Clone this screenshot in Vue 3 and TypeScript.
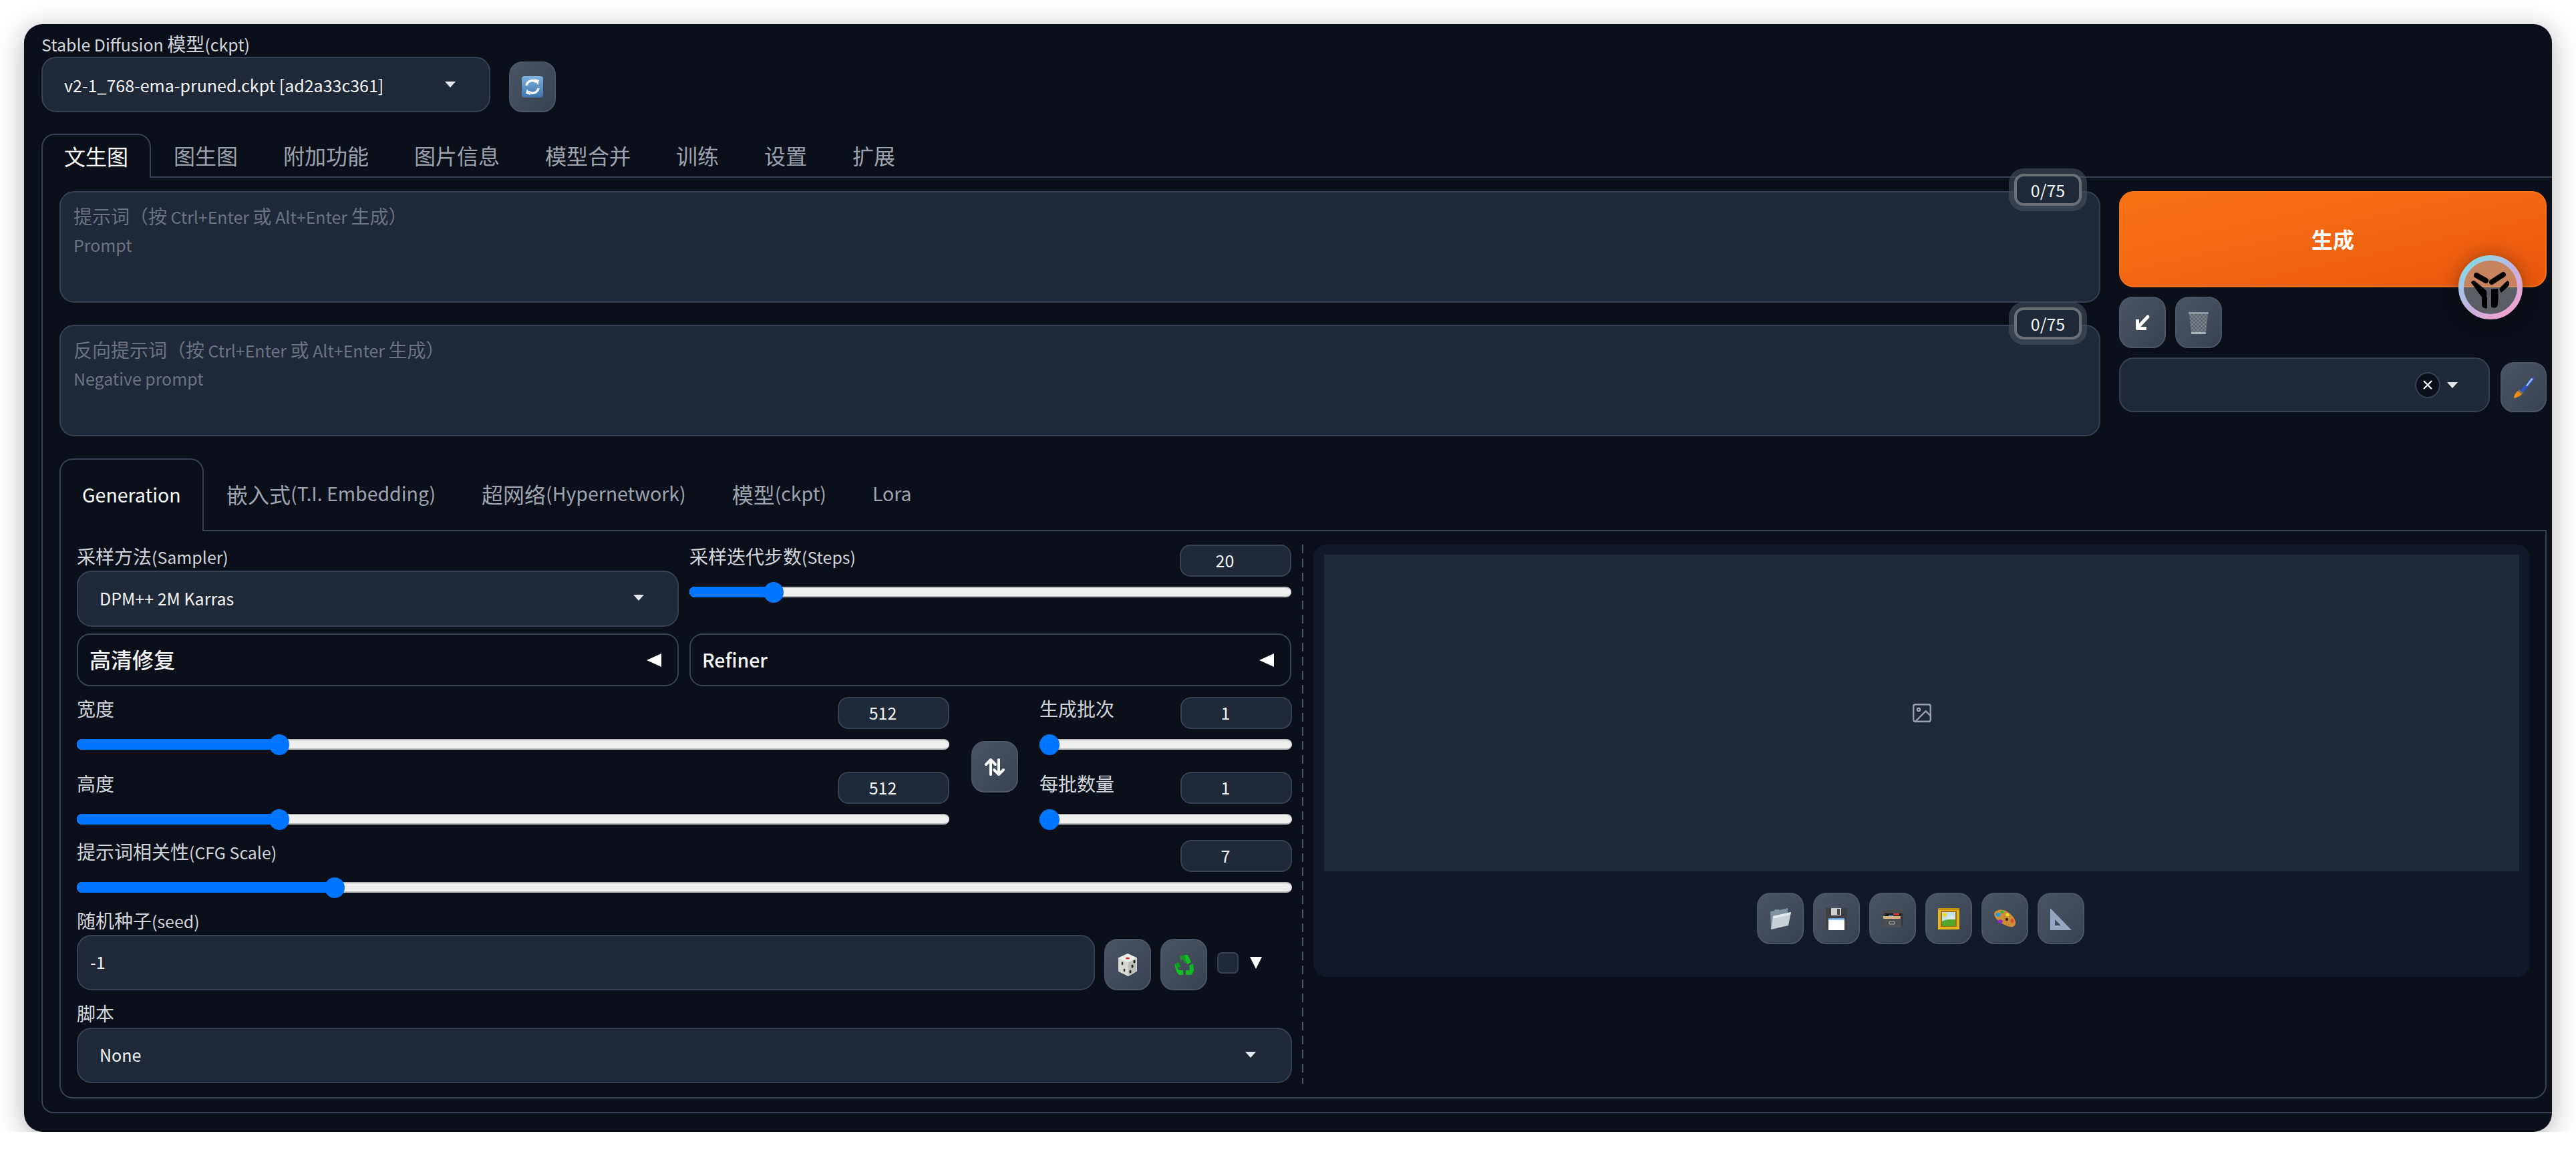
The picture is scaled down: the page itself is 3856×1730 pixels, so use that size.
<script setup lang="ts">
interface SliderItem {
  cjk: string;
  latin?: string;
  value: number;
  left: number; // thumb centre, percent of the track
}

interface TabItem {
  cjk?: string;
  latin?: string;
}

const mainTabs = ["文生图", "图生图", "附加功能", "图片信息", "模型合并", "训练", "设置", "扩展"];
const subTabs: TabItem[] = [
  { latin: "Generation" },
  { cjk: "嵌入式", latin: "(T.I. Embedding)" },
  { cjk: "超网络", latin: "(Hypernetwork)" },
  { cjk: "模型", latin: "(ckpt)" },
  { latin: "Lora" },
];

const steps: SliderItem = { cjk: "采样迭代步数", latin: "(Steps)", value: 20, left: 14 };
const sizeSliders: SliderItem[] = [
  { cjk: "宽度", value: 512, left: 23.2 },
  { cjk: "高度", value: 512, left: 23.2 },
];
const batchSliders: SliderItem[] = [
  { cjk: "生成批次", value: 1, left: 4 },
  { cjk: "每批数量", value: 1, left: 4 },
];
const cfg: SliderItem = { cjk: "提示词相关性", latin: "(CFG Scale)", value: 7, left: 21.2 };
</script>

<template>
  <div class="window">
    <div class="model-row">
      <div class="model-field">
        <div class="field-label model-label"><span class="lat">Stable Diffusion </span>模型<span class="lat">(ckpt)</span></div>
        <div class="select model-select">
          <span>v2-1_768-ema-pruned.ckpt [ad2a33c361]</span>
          <i class="caret"></i>
        </div>
      </div>
      <button class="tool-btn refresh-btn">
        <svg width="34" height="34" viewBox="0 0 34 34">
          <defs>
            <linearGradient id="blue-tile" x1="0" y1="0" x2="0" y2="1">
              <stop offset="0" stop-color="#7fb2dd" />
              <stop offset="1" stop-color="#3f74ad" />
            </linearGradient>
          </defs>
          <rect x="1" y="1" width="32" height="32" rx="4" fill="url(#blue-tile)" />
          <path d="M8 15a9 9 0 0 1 15-5" fill="none" stroke="#fff" stroke-width="3.4" />
          <path d="M20 5l7 2-2 7z" fill="#fff" />
          <path d="M26 19a9 9 0 0 1-15 5" fill="none" stroke="#fff" stroke-width="3.4" />
          <path d="M14 29l-7-2 2-7z" fill="#fff" />
        </svg>
      </button>
    </div>

    <div class="tabs main-tabs">
      <div v-for="(t, i) in mainTabs" :key="t" class="tab" :class="{ active: i === 0 }">{{ t }}</div>
      <div class="tab-rest"></div>
    </div>

    <div class="tab-panel">
      <div class="prompt-row">
        <div class="prompts">
          <div class="prompt-box">
            <div class="prompt-input">
              <div>提示词（按<span class="lat"> Ctrl+Enter </span>或<span class="lat"> Alt+Enter </span>生成）</div>
              <div><span class="lat">Prompt</span></div>
            </div>
            <div class="token-count">0/75</div>
          </div>
          <div class="prompt-box">
            <div class="prompt-input">
              <div>反向提示词（按<span class="lat"> Ctrl+Enter </span>或<span class="lat"> Alt+Enter </span>生成）</div>
              <div><span class="lat">Negative prompt</span></div>
            </div>
            <div class="token-count">0/75</div>
          </div>
        </div>

        <div class="actions">
          <button class="generate-btn">生成</button>
          <div class="action-tools">
            <button class="tool-btn">
              <svg width="28" height="28" viewBox="0 0 28 28" fill="none" stroke="#fff" stroke-width="5" stroke-linecap="round">
                <path d="M22 5L7 21" />
                <path d="M6.5 9v13.5H20" stroke-linecap="butt" stroke-linejoin="round" />
              </svg>
            </button>
            <button class="tool-btn">
              <svg width="36" height="36" viewBox="0 0 36 36">
                <defs>
                  <pattern id="mesh" width="4" height="4" patternUnits="userSpaceOnUse" patternTransform="rotate(45)">
                    <rect width="4" height="4" fill="#5b636c" />
                    <path d="M0 0h4M0 0v4" stroke="#9aa3ab" stroke-width="1" />
                  </pattern>
                </defs>
                <path d="M4 4h28l-3 30H7z" fill="url(#mesh)" />
                <rect x="3" y="2" width="30" height="3" rx="1" fill="#8d979f" />
                <rect x="7" y="32" width="22" height="3" rx="1" fill="#a6b0b8" />
              </svg>
            </button>
          </div>
          <div class="style-row">
            <div class="select style-select">
              <span class="clear-x">
                <svg width="16" height="16" viewBox="0 0 16 16" stroke="#fff" stroke-width="2.2"><path d="M2 2l12 12M14 2L2 14" /></svg>
              </span>
              <i class="caret"></i>
            </div>
            <button class="tool-btn brush-btn">
              <svg width="34" height="34" viewBox="0 0 34 34">
                <path d="M29 2c2-1 4 1 3 3L16 24l-4-3z" fill="#2f55c8" />
                <path d="M28 3l3 1-9 11-2-1z" fill="#9dbcf4" />
                <path d="M10 20l6 5-2 2-6-5z" fill="#77767a" />
                <path d="M2 33c0-4 2-8 6-11l6 5c-3 3-7 5-12 6z" fill="#f08a12" />
              </svg>
            </button>
          </div>
        </div>

        <div class="avatar">
          <svg width="96" height="96" viewBox="0 0 96 96">
            <defs>
              <linearGradient id="ring" x1="0.1" y1="0.1" x2="0.8" y2="0.95">
                <stop offset="0" stop-color="#86d9e6" />
                <stop offset="0.5" stop-color="#c2b4e3" />
                <stop offset="1" stop-color="#efa2cd" />
              </linearGradient>
            </defs>
            <circle cx="48" cy="48" r="44" fill="rgba(166, 166, 170, 0.52)" stroke="url(#ring)" stroke-width="8" />
            <path d="M27 30l14 8" stroke="#000" stroke-width="8" stroke-linecap="round" />
            <path d="M67 29L50 40" stroke="#000" stroke-width="8" stroke-linecap="round" />
            <path d="M19 41c1-3 4-4 6-2l16 13c2 2 2 9 0 13-3 0-6-2-8-5z" fill="#000" />
            <path d="M75 39c2 3 1 6-1 8l-10 9c-2-3-3-5-2-7l9-9c1-1 3-2 4-1z" fill="#000" />
            <path d="M35 57l8 6v16c-5 1-8-1-8-6z" fill="#000" />
            <path d="M49 51l10-1c1 9 1 20-1 27-3 2-7 2-9 0z" fill="#000" />
          </svg>
        </div>
      </div>

      <div class="tabs sub-tabs">
        <div v-for="(t, i) in subTabs" :key="i" class="tab" :class="{ active: i === 0 }">
          {{ t.cjk }}<span v-if="t.latin" class="lat">{{ t.latin }}</span>
        </div>
        <div class="tab-rest"></div>
      </div>

      <div class="sub-panel">
        <div class="params">
          <div class="two-col">
            <div>
              <div class="field-label">采样方法<span class="lat">(Sampler)</span></div>
              <div class="select sampler-select">
                <span>DPM++ 2M Karras</span>
                <i class="caret"></i>
              </div>
            </div>
            <div class="slider-field">
              <div class="slider-head">
                <span class="field-label">{{ steps.cjk }}<span class="lat">{{ steps.latin }}</span></span>
                <div class="num-box">{{ steps.value }}</div>
              </div>
              <div class="track">
                <div class="track-fill" :style="{ width: steps.left + '%' }"></div>
                <div class="thumb" :style="{ left: steps.left + '%' }"></div>
              </div>
            </div>
          </div>

          <div class="two-col accordion-row">
            <div class="accordion">
              <span class="accordion-title">高清修复</span>
              <i class="caret-left"></i>
            </div>
            <div class="accordion">
              <span class="accordion-title"><span class="lat">Refiner</span></span>
              <i class="caret-left"></i>
            </div>
          </div>

          <div class="size-row">
            <div class="slider-stack">
              <div v-for="s in sizeSliders" :key="s.cjk" class="slider-field">
                <div class="slider-head">
                  <span class="field-label">{{ s.cjk }}</span>
                  <div class="num-box">{{ s.value }}</div>
                </div>
                <div class="track">
                  <div class="track-fill" :style="{ width: s.left + '%' }"></div>
                  <div class="thumb" :style="{ left: s.left + '%' }"></div>
                </div>
              </div>
            </div>
            <button class="tool-btn swap-btn">
              <svg width="34" height="28" viewBox="0 0 34 28" fill="none" stroke="#fff" stroke-width="4" stroke-linecap="round" stroke-linejoin="round">
                <path d="M11 25V3M4 10l7-7 7 7" />
                <path d="M23 3v22M16 18l7 7 7-7" />
              </svg>
            </button>
            <div class="slider-stack">
              <div v-for="s in batchSliders" :key="s.cjk" class="slider-field">
                <div class="slider-head">
                  <span class="field-label">{{ s.cjk }}</span>
                  <div class="num-box">{{ s.value }}</div>
                </div>
                <div class="track">
                  <div class="track-fill" :style="{ width: s.left + '%' }"></div>
                  <div class="thumb" :style="{ left: s.left + '%' }"></div>
                </div>
              </div>
            </div>
          </div>

          <div class="slider-field cfg-field">
            <div class="slider-head">
              <span class="field-label">{{ cfg.cjk }}<span class="lat">{{ cfg.latin }}</span></span>
              <div class="num-box">{{ cfg.value }}</div>
            </div>
            <div class="track">
              <div class="track-fill" :style="{ width: cfg.left + '%' }"></div>
              <div class="thumb" :style="{ left: cfg.left + '%' }"></div>
            </div>
          </div>

          <div class="seed-field">
            <div class="field-label">随机种子<span class="lat">(seed)</span></div>
            <div class="seed-row">
              <div class="select seed-input">-1</div>
              <button class="tool-btn">
                <svg width="34" height="34" viewBox="0 0 34 34">
                  <path d="M17 1l13 6v19l-12 7-14-7V7z" fill="#d8d8d6" stroke="#d8d8d6" stroke-width="2" stroke-linejoin="round" />
                  <path d="M17 1l13 6-13 6L4 7z" fill="#efefed" />
                  <path d="M18 14l12-7v19l-12 7z" fill="#bdbdba" />
                  <ellipse cx="17" cy="7" rx="3" ry="1.6" fill="#e0323a" />
                  <ellipse cx="27" cy="12" rx="1.6" ry="2.6" fill="#222" />
                  <ellipse cx="24" cy="19" rx="1.6" ry="2.6" fill="#222" />
                  <ellipse cx="21" cy="27" rx="1.6" ry="2.6" fill="#222" />
                  <ellipse cx="9" cy="15" rx="1.4" ry="2.4" fill="#333" />
                  <ellipse cx="12" cy="25" rx="1.4" ry="2.4" fill="#333" />
                </svg>
              </button>
              <button class="tool-btn">
                <svg width="34" height="32" viewBox="0 0 34 32">
                  <path d="M11 3l7-2 6 10-5 3-4-7-3 4z" fill="#1d8f2c" />
                  <path d="M18 1h5l5 11-6 3z" fill="#12c023" />
                  <path d="M3 15l6-3 4 7-5 1 3 5H6z" fill="#0f9c20" />
                  <path d="M3 15l3 11 4 5h6v-7H9z" fill="#12c023" />
                  <path d="M31 14l-6 3 1 7h-6v7h8l4-6z" fill="#10b821" />
                </svg>
              </button>
              <i class="checkbox"></i>
              <i class="caret-big"></i>
            </div>
          </div>

          <div class="script-field">
            <div class="field-label">脚本</div>
            <div class="select script-select">
              <span>None</span>
              <i class="caret"></i>
            </div>
          </div>
        </div>

        <div class="dashed"></div>

        <div class="gallery">
          <div class="image-empty">
            <svg width="34" height="34" viewBox="0 0 24 24" fill="none" stroke="#9ca3af" stroke-width="1.6" stroke-linecap="round" stroke-linejoin="round">
              <rect x="3" y="3" width="18" height="18" rx="2" />
              <circle cx="8.5" cy="8.5" r="1.5" />
              <path d="M21 15l-5-5L5 21" />
            </svg>
          </div>
          <div class="gallery-tools">
            <button class="tool-btn">
              <svg width="34" height="34" viewBox="0 0 34 34">
                <path d="M2 6l6-1 1-2 6 0 1 1 12-3v24L3 33z" fill="#7b939c" />
                <path d="M6 13l27-6-4 20-26 6z" fill="#c6d0d5" />
                <path d="M6 13l27-6-1 4-26 6z" fill="#e3e8ea" />
              </svg>
            </button>
            <button class="tool-btn">
              <svg width="34" height="34" viewBox="0 0 34 34">
                <rect x="1" y="1" width="32" height="32" fill="#3f3f42" />
                <rect x="9" y="1" width="15" height="11" fill="#cfcfcf" />
                <rect x="18" y="2" width="4" height="9" fill="#4a4a4a" />
                <rect x="5" y="16" width="24" height="18" fill="#fff" />
                <rect x="5" y="16" width="24" height="2.4" fill="#5fa0e0" />
              </svg>
            </button>
            <button class="tool-btn">
              <svg width="32" height="26" viewBox="0 0 32 26">
                <rect x="1" y="0" width="30" height="5" rx="1" fill="#4a4a4c" />
                <rect x="4" y="5" width="25" height="8" fill="#1a1a1a" />
                <rect x="17" y="5" width="9" height="3" fill="#c8382c" />
                <rect x="10" y="7" width="7" height="2" fill="#3a78c0" />
                <path d="M2 9h26v6H2z" fill="#d8b27a" />
                <rect x="1" y="13" width="28" height="13" fill="#4c4f52" />
                <rect x="11" y="17" width="8" height="4" rx="1" fill="none" stroke="#aaa" stroke-width="1.2" />
                <path d="M29 5h2v16l-2 5z" fill="#333" />
              </svg>
            </button>
            <button class="tool-btn">
              <svg width="34" height="34" viewBox="0 0 34 34">
                <rect x="1" y="1" width="32" height="32" fill="#e8b41a" />
                <rect x="1" y="1" width="32" height="3" fill="#c98f0d" />
                <rect x="5" y="5" width="24" height="24" fill="#9c6f10" />
                <rect x="7" y="7" width="20" height="21" fill="#bfe0ee" />
                <circle cx="11" cy="11" r="3" fill="#f2d421" />
                <path d="M16 14l5-3 6 4v4H13z" fill="#dfe6e6" />
                <path d="M7 21c6-4 13-3 20-3v10H7z" fill="#52a62c" />
              </svg>
            </button>
            <button class="tool-btn">
              <svg width="36" height="28" viewBox="0 0 36 28">
                <path d="M2 6c3-6 12-7 19-3s14 12 13 18-7 6-12 4S2 16 2 6z" fill="#cf8f36" />
                <ellipse cx="8" cy="8" rx="3.6" ry="3" fill="#2b9be0" />
                <ellipse cx="14" cy="4" rx="2.6" ry="2.2" fill="#38b835" />
                <ellipse cx="22" cy="8" rx="2.6" ry="2.2" fill="#f1dc2c" />
                <ellipse cx="11" cy="18" rx="3.8" ry="2.8" fill="#8a2fc0" />
                <circle cx="21" cy="15" r="2.2" fill="#2c241c" />
                <ellipse cx="29" cy="17" rx="2.4" ry="3" fill="#e2473a" />
              </svg>
            </button>
            <button class="tool-btn">
              <svg width="34" height="34" viewBox="0 0 34 34">
                <path fill-rule="evenodd" d="M1 1l32 33H1zM8 18v9h9z" fill="#93a6c2" />
              </svg>
            </button>
          </div>
        </div>
      </div>
    </div>
  </div>
  <div class="watermark">CSDN @小</div>
</template>

<style>
html,
body {
  margin: 0;
  background: #fff;
}
</style>

<style scoped>
* {
  box-sizing: border-box;
}

.window {
  position: relative;
  margin: 36px 0 0 36px;
  width: 3784px;
  height: 1658px;
  background: #0b0f19;
  border-radius: 28px;
  overflow: hidden;
  box-shadow: 0 8px 42px rgba(0, 0, 0, 0.3);
  font-family: "Noto Sans CJK SC", "Noto Sans", sans-serif;
  font-size: 25px;
  color: #f3f4f6;
}

button {
  font-family: inherit;
  cursor: pointer;
}

i {
  display: block;
}

/* Latin runs sit a bit smaller than the CJK around them */
.lat {
  font-size: 0.89em;
}

.field-label {
  display: block;
  height: 39px;
  font-size: 28px;
  line-height: 35px;
  color: #d1d5db;
}

.model-row {
  display: flex;
  align-items: flex-end;
  gap: 28px;
  padding: 14px 0 0 26px;
}

.model-label {
  height: 35px;
  line-height: 31px;
}

.select {
  display: flex;
  align-items: center;
  justify-content: space-between;
  background: #1f2937;
  border: 2px solid #374151;
  border-radius: 22px;
  color: #f3f4f6;
}

.model-select {
  width: 672px;
  height: 83px;
  padding: 0 50px 0 32px;
}

.caret {
  width: 0;
  height: 0;
  border-left: 8px solid transparent;
  border-right: 8px solid transparent;
  border-top: 9px solid #e5e7eb;
}

.tool-btn {
  display: flex;
  align-items: center;
  justify-content: center;
  flex: none;
  width: 70px;
  height: 77px;
  padding: 0;
  background: linear-gradient(to bottom right, #4b5563, #374151);
  border: 2px solid #4b5563;
  border-radius: 20px;
}

.refresh-btn {
  height: 76px;
}

.tabs {
  display: flex;
}

.main-tabs {
  height: 66px;
  margin: 32px 0 0 26px;
}

.sub-tabs {
  height: 109px;
  margin-top: 33px;
}

.tab {
  display: flex;
  align-items: center;
  padding: 0 34px;
  font-size: 32px;
  line-height: 1;
  color: #9ca3af;
  white-space: pre;
  border-bottom: 2px solid #374151;
}

.sub-tabs .tab {
  padding: 0 34.5px 2px;
}

.tab.active,
.sub-tabs .tab.active {
  padding: 0 32px 2px;
  color: #fff;
  border: 2px solid #374151;
  border-bottom: none;
  border-radius: 20px 20px 0 0;
}

.tab-rest {
  flex: 1;
  border-bottom: 2px solid #374151;
}

.tab-panel {
  position: relative;
  margin-left: 26px;
  padding: 20px 8px 20px 25px;
  height: 1400px;
  border-left: 2px solid #374151;
  border-bottom: 2px solid #374151;
  border-bottom-left-radius: 18px;
}

.prompt-row {
  display: flex;
  gap: 28px;
}

.prompts {
  display: flex;
  flex-direction: column;
  gap: 33px;
  flex: 1;
}

.prompt-box {
  position: relative;
  height: 167px;
}

.prompt-input {
  height: 100%;
  padding: 15px 19px;
  background: #1f2937;
  border: 2px solid #374151;
  border-radius: 22px;
  color: #6b7280;
  font-size: 28px;
  line-height: 41px;
  white-space: pre;
}

.token-count {
  position: absolute;
  top: -26px;
  right: 28px;
  width: 101px;
  height: 48px;
  display: flex;
  align-items: center;
  justify-content: center;
  background: #1f2937;
  border: 4px solid #6b6f76;
  border-radius: 14px;
  box-shadow: 0 0 0 8px rgba(75, 85, 99, 0.55);
  color: #f3f4f6;
}

.actions {
  display: flex;
  flex-direction: column;
  gap: 14px;
  width: 640px;
}

.generate-btn {
  height: 144px;
  padding: 0 0 2px;
  background: linear-gradient(to bottom right, #f97316, #ea580c);
  border: 2px solid #f97316;
  border-radius: 22px;
  color: #fff;
  font-size: 32px;
  font-weight: 700;
}

.action-tools {
  display: flex;
  gap: 14px;
}

.style-row {
  display: flex;
  align-items: flex-end;
  justify-content: space-between;
}

.style-select {
  width: 555px;
  height: 82px;
  padding-right: 46px;
  justify-content: flex-end;
  gap: 10px;
}

.clear-x {
  display: flex;
  align-items: center;
  justify-content: center;
  width: 38px;
  height: 39px;
  background: #0b0f19;
  border: 2px solid #374151;
  border-radius: 50%;
}

.brush-btn {
  width: 69px;
  height: 75px;
}

.avatar {
  position: absolute;
  top: 116px;
  right: 44px;
  width: 96px;
  height: 96px;
  border-radius: 50%;
  box-shadow: 0 0 28px rgba(0, 0, 0, 0.35);
}

.avatar svg {
  display: block;
}

.sub-panel {
  display: flex;
  height: 849px;
  padding: 20px 0 20px 24px;
  border: 2px solid #374151;
  border-top: none;
  border-radius: 0 0 20px 20px;
}

.params {
  display: flex;
  flex-direction: column;
  width: 1819px;
  flex: none;
}

.two-col {
  display: grid;
  grid-template-columns: 901px 901px;
  gap: 16px;
}

.sampler-select {
  height: 84px;
  padding: 0 50px 3px 32px;
}

.slider-head {
  display: flex;
  justify-content: space-between;
  align-items: flex-start;
  height: 48px;
}

.num-box {
  width: 167px;
  height: 48px;
  padding-right: 32px;
  line-height: 42px;
  text-align: center;
  background: #1f2937;
  border: 2px solid #374151;
  border-radius: 16px;
  color: #f3f4f6;
}

.track {
  position: relative;
  height: 16px;
  margin-top: 15px;
  background: #efefef;
  border-top: 2px solid #b8b8b8;
  border-bottom: 2px solid #b8b8b8;
  border-radius: 8px;
}

.track-fill {
  position: absolute;
  top: -2px;
  bottom: -2px;
  left: 0;
  background: #0075ff;
  border-radius: 8px 0 0 8px;
}

.thumb {
  position: absolute;
  top: -9px;
  width: 30px;
  height: 31px;
  margin-left: -15px;
  background: #0075ff;
  border-radius: 50%;
}

.accordion-row {
  margin-top: 10px;
}

.accordion {
  display: flex;
  align-items: center;
  justify-content: space-between;
  height: 79px;
  padding: 0 24px 0 17px;
  border: 2px solid #374151;
  border-radius: 20px;
}

.accordion-title {
  font-size: 32px;
  line-height: 44px;
  padding-bottom: 4px;
  font-weight: 500;
  color: #f3f4f6;
}

.caret-left {
  width: 0;
  height: 0;
  border-top: 10px solid transparent;
  border-bottom: 10px solid transparent;
  border-right: 22px solid #fff;
}

.size-row {
  display: grid;
  grid-template-columns: 1306px 70px 378px;
  justify-content: space-between;
  margin-top: 16px;
}

.slider-stack {
  display: flex;
  flex-direction: column;
  gap: 33px;
}

.swap-btn {
  margin-top: 66px;
}

.cfg-field {
  margin-top: 23px;
}

.seed-field {
  margin-top: 24px;
}

.seed-row {
  display: flex;
  align-items: flex-end;
  gap: 14px;
}

.seed-input {
  flex: none;
  width: 1524px;
  height: 83px;
  padding: 0 0 3px 18px;
  justify-content: flex-start;
}

.checkbox {
  align-self: center;
  width: 32px;
  height: 32px;
  margin-left: 1px;
  background: #1f2937;
  border: 2px solid #374151;
  border-radius: 7px;
}

.caret-big {
  align-self: center;
  margin-left: 3px;
  width: 0;
  height: 0;
  border-left: 9px solid transparent;
  border-right: 9px solid transparent;
  border-top: 18px solid #fff;
}

.script-field {
  margin-top: 17px;
}

.script-select {
  height: 83px;
  padding: 0 52px 3px 32px;
}

.dashed {
  flex: none;
  width: 2px;
  margin: 0 15px;
  background: repeating-linear-gradient(to bottom, #4b5563 0 13px, transparent 13px 21px);
}

.gallery {
  flex: none;
  width: 1821px;
  height: 647px;
  padding: 15px 16px 0;
  background: #111827;
  border-radius: 20px;
}

.image-empty {
  display: flex;
  align-items: center;
  justify-content: center;
  height: 474px;
  background: #1f2937;
}

.gallery-tools {
  display: flex;
  justify-content: center;
  gap: 14px;
  margin-top: 32px;
  padding-right: 3px;
}

.watermark {
  position: absolute;
  left: 3741px;
  top: 1702px;
  font-family: "Liberation Sans", "Noto Sans CJK SC", sans-serif;
  font-size: 17px;
  color: rgba(255, 255, 255, 0.5);
}
</style>
